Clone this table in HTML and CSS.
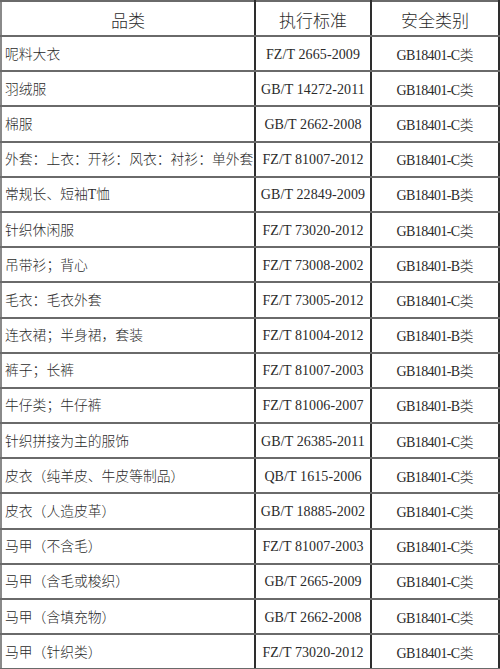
FILE: index.html
```html
<!DOCTYPE html>
<html lang="zh-CN">
<head>
<meta charset="utf-8">
<title>品类 执行标准 安全类别</title>
<link rel="stylesheet" href="styles.css">
</head>
<body>
<table class="std">
  <colgroup>
    <col class="c1"><col class="c2"><col class="c3">
  </colgroup>
  <thead>
    <tr><th>品类</th><th>执行标准</th><th>安全类别</th></tr>
  </thead>
  <tbody>
    <tr><td class="name">呢料大衣</td><td class="code">FZ/T 2665-2009</td><td class="cat">GB18401-C<span class="cj">类</span></td></tr>
    <tr><td class="name">羽绒服</td><td class="code">GB/T 14272-2011</td><td class="cat">GB18401-C<span class="cj">类</span></td></tr>
    <tr><td class="name">棉服</td><td class="code">GB/T 2662-2008</td><td class="cat">GB18401-C<span class="cj">类</span></td></tr>
    <tr><td class="name">外套：上衣：开衫：风衣：衬衫：单外套</td><td class="code">FZ/T 81007-2012</td><td class="cat">GB18401-C<span class="cj">类</span></td></tr>
    <tr><td class="name">常规长、短袖T恤</td><td class="code">GB/T 22849-2009</td><td class="cat">GB18401-B<span class="cj">类</span></td></tr>
    <tr><td class="name">针织休闲服</td><td class="code">FZ/T 73020-2012</td><td class="cat">GB18401-C<span class="cj">类</span></td></tr>
    <tr><td class="name">吊带衫；背心</td><td class="code">FZ/T 73008-2002</td><td class="cat">GB18401-B<span class="cj">类</span></td></tr>
    <tr><td class="name">毛衣：毛衣外套</td><td class="code">FZ/T 73005-2012</td><td class="cat">GB18401-C<span class="cj">类</span></td></tr>
    <tr><td class="name">连衣裙；半身裙，套装</td><td class="code">FZ/T 81004-2012</td><td class="cat">GB18401-B<span class="cj">类</span></td></tr>
    <tr><td class="name">裤子；长裤</td><td class="code">FZ/T 81007-2003</td><td class="cat">GB18401-B<span class="cj">类</span></td></tr>
    <tr><td class="name">牛仔类；牛仔裤</td><td class="code">FZ/T 81006-2007</td><td class="cat">GB18401-B<span class="cj">类</span></td></tr>
    <tr><td class="name">针织拼接为主的服饰</td><td class="code">GB/T 26385-2011</td><td class="cat">GB18401-C<span class="cj">类</span></td></tr>
    <tr><td class="name">皮衣（纯羊皮、牛皮等制品）</td><td class="code">QB/T 1615-2006</td><td class="cat">GB18401-C<span class="cj">类</span></td></tr>
    <tr><td class="name">皮衣（人造皮革）</td><td class="code">GB/T 18885-2002</td><td class="cat">GB18401-C<span class="cj">类</span></td></tr>
    <tr><td class="name">马甲（不含毛）</td><td class="code">FZ/T 81007-2003</td><td class="cat">GB18401-C<span class="cj">类</span></td></tr>
    <tr><td class="name">马甲（含毛或梭织）</td><td class="code">GB/T 2665-2009</td><td class="cat">GB18401-C<span class="cj">类</span></td></tr>
    <tr><td class="name">马甲（含填充物）</td><td class="code">GB/T 2662-2008</td><td class="cat">GB18401-C<span class="cj">类</span></td></tr>
    <tr><td class="name">马甲（针织类）</td><td class="code">FZ/T 73020-2012</td><td class="cat">GB18401-C<span class="cj">类</span></td></tr>
  </tbody>
</table>
</body>
</html>
```

FILE: styles.css
```css
html, body {
  margin: 0;
  padding: 0;
  background: #ffffff;
}

.std {
  border-collapse: collapse;
  table-layout: fixed;
  width: 498px;
  margin: 0;
  color: #2a2a2a;
  font-family: "Liberation Serif", "Noto Sans CJK SC", serif;
}

.c1 { width: 254px; }
.c2 { width: 116px; }
.c3 { width: 128px; }

.std th,
.std td {
  border-top: 2px solid #6a6a6a;
  border-bottom: 2px solid #6a6a6a;
  border-left: 2px solid #2e2e2e;
  border-right: 2px solid #2e2e2e;
  padding: 0;
  overflow: visible;
  white-space: nowrap;
  line-height: 18px;
}

.std tr > :first-child { border-left-color: #8a8a8a; }

.std th {
  height: 31px;
  padding-top: 2px;
  font-size: 17px;
  text-align: center;
  font-family: "Noto Sans CJK SC", sans-serif;
  font-weight: 300;
}

.std td {
  height: 31.2px;
  padding-top: 2px;
  font-size: 13.8px;
}

.std td.name {
  padding-left: 3px;
  text-align: left;
  font-weight: 300;
}

.std td.code {
  text-align: center;
  font-size: 14px;
  letter-spacing: 0.1px;
}

.std td.cat {
  text-align: center;
  font-size: 14px;
  letter-spacing: -0.6px;
}

.cj {
  font-family: "Noto Sans CJK SC", sans-serif;
  font-size: 13.8px;
  font-weight: 300;
  letter-spacing: 0;
}
```
